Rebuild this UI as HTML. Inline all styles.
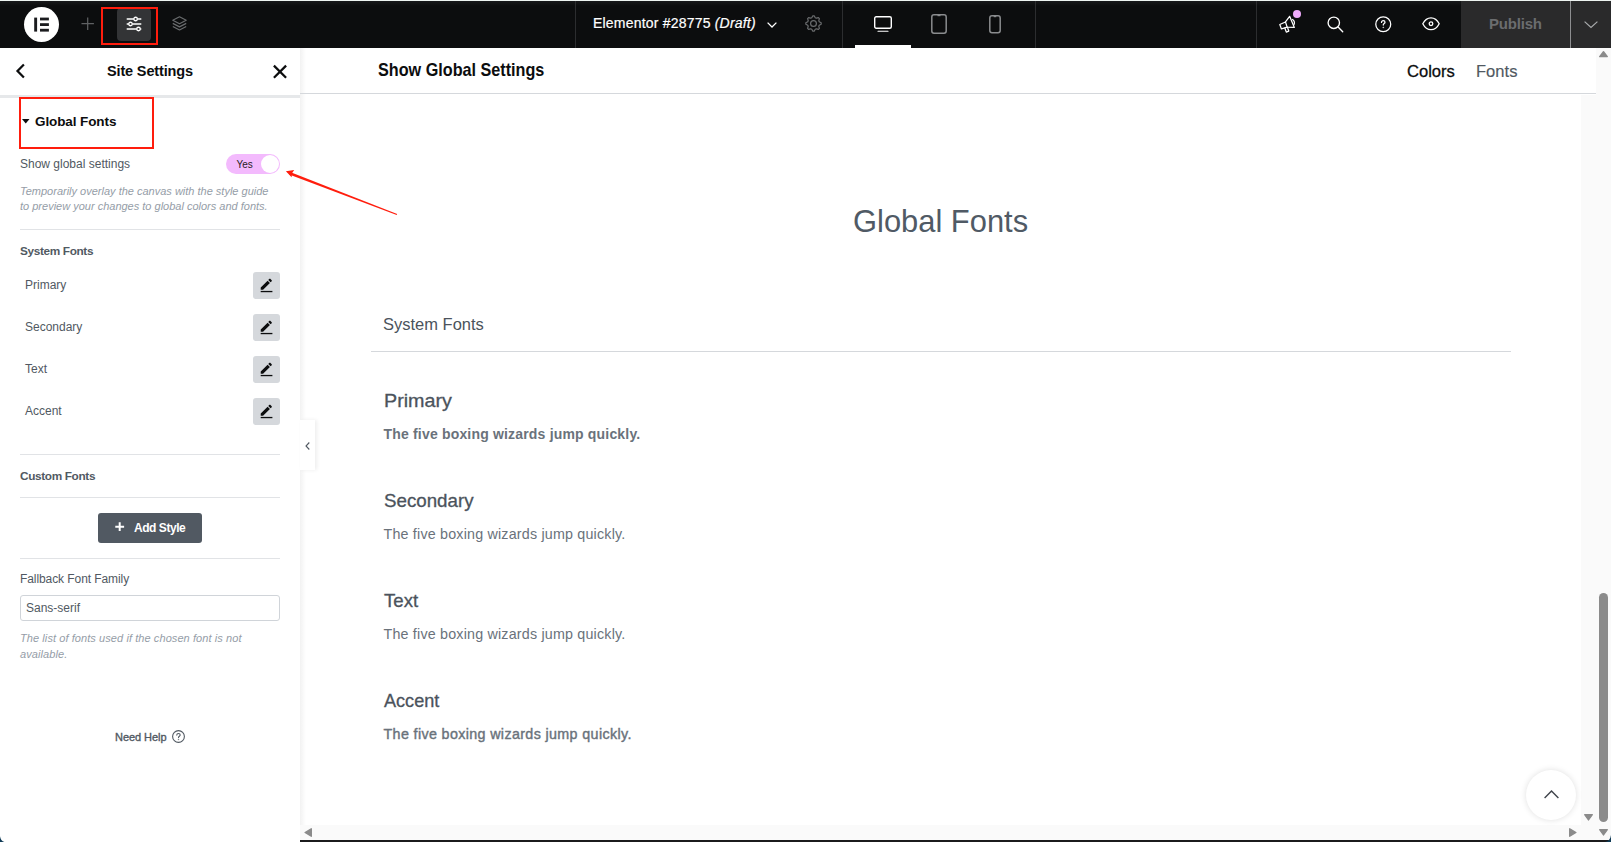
<!DOCTYPE html>
<html lang="en">
<head>
<meta charset="utf-8">
<title>Elementor - Site Settings</title>
<style>
*{box-sizing:border-box;margin:0;padding:0}
html,body{width:1611px;height:842px;overflow:hidden;background:#fff}
body{position:relative;font-family:"Liberation Sans",sans-serif;color:#0c0d0e}
.abs{position:absolute}
.t{position:absolute;white-space:nowrap;line-height:1;transform-origin:0 50%}
svg{position:absolute;overflow:visible}

/* top bar */
#topbar{left:0;top:0;width:1611px;height:48px;background:linear-gradient(180deg,#17181a 0,#131415 2px,#0c0d0e 5px,#0c0d0e 100%);border-top:1px solid #eef4f1}
.vsep{position:absolute;top:1px;width:1px;height:47px;background:#2c2d2f}
#logo{left:24px;top:7px;width:35px;height:35px;border-radius:50%;background:#fff}
#actbtn{left:117px;top:8px;width:34px;height:33px;border-radius:4px;background:#333436}
.redbox{position:absolute;border:2px solid #ff1d0d}
#pub{left:1461px;top:1px;width:109px;height:47px;background:#2a2a2b}
#pubdd{left:1571px;top:1px;width:40px;height:47px;background:#2a2a2b}
#deskul{left:855px;top:45px;width:56px;height:3px;background:#fff}

/* panel */
#panel{left:0;top:48px;width:300px;height:794px;background:#fff}
#phead-shadow{left:0;top:95px;width:300px;height:3px;background:#e6e8ea}
#pedge{left:300px;top:48px;width:6px;height:792px;background:linear-gradient(90deg,rgba(0,0,0,.05),rgba(0,0,0,0))}
.hr{position:absolute;left:20px;width:260px;height:1px;background:#e1e3e6}
.lbl{color:#515962;font-size:12px}
.ebtn{position:absolute;left:253px;width:27px;height:27px;border-radius:3px;background:#d5d8dc}
.desc{position:absolute;left:20px;font-style:italic;font-size:11px;line-height:15px;color:#959da7;white-space:nowrap}
#toggle{left:226px;top:154px;width:54px;height:20px;border-radius:10px;background:#f3bafd}
#knob{left:261px;top:155px;width:18px;height:18px;border-radius:50%;background:#fff}
#addstyle{left:98px;top:513px;width:104px;height:30px;border-radius:3px;background:#515962}
#finput{left:20px;top:595px;width:260px;height:26px;border:1px solid #d0d4d9;border-radius:3px;background:#fff}
#handle{left:300px;top:420px;width:15px;height:50px;background:#fff;box-shadow:2px 0 4px rgba(0,0,0,.07)}

/* preview */
#mhline{left:300px;top:93px;width:1296px;height:1px;background:#d5d8dc}
#sysline{left:371px;top:351px;width:1140px;height:1px;background:#d5d8dc}
#innersb{left:1581px;top:95px;width:15px;height:730px;background:#fafafa}
#outersb{left:1596px;top:48px;width:15px;height:792px;background:#fafafa}
#hsb{left:300px;top:825px;width:1296px;height:15px;background:#fafafa}
#thumb{left:1599px;top:593px;width:9px;height:229px;border-radius:5px;background:#8b8b8b}
#botline{left:300px;top:840px;width:1311px;height:2px;background:#1b1b1c}
#totop{left:1526px;top:770px;width:50px;height:50px;border-radius:50%;background:#fff;box-shadow:0 0 6px rgba(0,0,0,.13)}
.h{color:#4b535c}
.s{color:#6a727b}
</style>
</head>
<body>

<!-- ============ TOP BAR ============ -->
<div class="abs" id="topbar"></div>
<div class="abs" id="logo"></div>
<svg style="left:24px;top:6.500px" width="35" height="35" viewBox="0 0 35 35"><g fill="#1b1c1f"><rect x="10.2" y="10.6" width="2.9" height="14"/><rect x="16" y="10.6" width="8.9" height="2.8"/><rect x="16" y="16.2" width="8.9" height="2.8"/><rect x="16" y="21.8" width="8.9" height="2.8"/></g></svg>
<!-- plus -->
<svg style="left:81px;top:17px" width="13.400" height="13.400" viewBox="0 0 14 14"><path d="M7 .5v13M.5 7h13" stroke="#5f6163" stroke-width="1.3" fill="none"/></svg>
<div class="abs" id="actbtn"></div>
<!-- sliders icon -->
<svg style="left:126px;top:16px" width="16" height="16" viewBox="0 0 16 16" fill="none" stroke="#fff" stroke-width="1.300"><path d="M.7 3h7.100M11.400 3h3.900M.7 8h2M6.300 8h9M.7 13h10M14.300 13h1"/><circle cx="9.600" cy="3" r="1.750"/><circle cx="4.500" cy="8" r="1.750"/><circle cx="12.500" cy="13" r="1.750"/></svg>
<div class="redbox" style="left:101px;top:7px;width:57px;height:38px"></div>
<!-- layers icon -->
<svg style="left:171.900px;top:15.900px" width="15" height="15" viewBox="0 0 15 15" fill="none" stroke="#6a6c6e" stroke-width="1.200" stroke-linejoin="round"><path d="M7.5 .8L14.2 4.3 7.5 7.8 .8 4.3z"/><path d="M.8 7.4L7.5 10.9 14.2 7.4"/><path d="M.8 10.5L7.5 14 14.2 10.5"/></svg>

<div class="vsep" style="left:575px"></div>
<span class="t" style="left:593px;top:16px;font-size:14px;color:#fff;letter-spacing:.2px;-webkit-text-stroke:.2px #fff">Elementor #28775 <i>(Draft)</i></span>
<svg style="left:767px;top:21.5px" width="10" height="6" viewBox="0 0 10 6"><path d="M.6 .6L5 5 9.4 .6" fill="none" stroke="#fff" stroke-width="1.3"/></svg>
<!-- gear -->
<svg style="left:804.800px;top:15.100px" width="17" height="17" viewBox="0 0 17 17" fill="none" stroke="#6a6c6e" stroke-width="1.200" stroke-linejoin="round"><path d="M7.83 0.83L9.17 0.83L10.25 2.76L11.32 3.20L13.45 2.60L14.40 3.55L13.80 5.68L14.24 6.75L16.17 7.83L16.17 9.17L14.24 10.25L13.80 11.32L14.40 13.45L13.45 14.40L11.32 13.80L10.25 14.24L9.17 16.17L7.83 16.17L6.75 14.24L5.68 13.80L3.55 14.40L2.60 13.45L3.20 11.32L2.76 10.25L0.83 9.17L0.83 7.83L2.76 6.75L3.20 5.68L2.60 3.55L3.55 2.60L5.68 3.20L6.75 2.76z"/><circle cx="8.500" cy="8.500" r="2.900"/></svg>
<div class="vsep" style="left:842px"></div>
<!-- desktop -->
<svg style="left:874px;top:15.5px" width="18" height="17" viewBox="0 0 18 17" fill="none" stroke="#fff" stroke-width="1.4"><rect x=".7" y=".7" width="16.6" height="11.6" rx="1.5"/><path d="M4 15.300h10" stroke-linecap="round" stroke-width="1.100"/></svg>
<div class="abs" id="deskul"></div>
<!-- tablet -->
<svg style="left:931px;top:13.500px" width="16" height="20" viewBox="0 0 16 20" fill="none" stroke="#8a8c8e" stroke-width="1.500"><rect x=".8" y=".8" width="14.400" height="18.400" rx="2.200"/><path d="M6.500 1.300h3" stroke-width="1.800"/></svg>
<!-- mobile -->
<svg style="left:989px;top:14.600px" width="12" height="19" viewBox="0 0 12 19" fill="none" stroke="#8a8c8e" stroke-width="1.500"><rect x=".8" y=".8" width="10.400" height="17" rx="2.200"/><path d="M4.700 1.300h2.600" stroke-width="1.800"/></svg>
<div class="vsep" style="left:1035px"></div>
<div class="vsep" style="left:1256px"></div>
<!-- megaphone -->
<svg style="left:1270px;top:5px" width="80" height="35" viewBox="0 0 1611 705" fill="none" stroke="#fff" stroke-width="25" stroke-linejoin="round" stroke-linecap="round"><path d="M312 342L197 392 230 482 345 445"/><path d="M312 342L395 228 490 452 345 445z"/><path d="M298 465L328 545 378 525 352 450"/><path d="M455 292Q512 332 482 400"/></svg>
<div class="abs" style="left:1292.900px;top:9.700px;width:8.400px;height:8.400px;border-radius:50%;background:#f0abfc"></div>
<!-- search -->
<svg style="left:1326.700px;top:15.700px" width="17" height="17" viewBox="0 0 17 17" fill="none" stroke="#fff" stroke-width="1.350"><circle cx="6.800" cy="6.800" r="5.700"/><path d="M11.100 11.100l4.600 4.600" stroke-linecap="round"/></svg>
<!-- help -->
<svg style="left:1374.500px;top:16px" width="16.500" height="16.500" viewBox="0 0 17 17" fill="none" stroke="#fff" stroke-width="1.300"><circle cx="8.500" cy="8.500" r="7.700"/><path d="M6.700 6.600c0-1.100.8-1.800 1.800-1.800s1.800.7 1.800 1.700c0 1.300-1.800 1.400-1.800 2.900" stroke-linecap="round"/><circle cx="8.500" cy="11.700" r=".45" fill="#fff" stroke-width=".6"/></svg>
<!-- eye -->
<svg style="left:1422px;top:16.900px" width="18" height="13.500" viewBox="0 0 18 13.500" fill="none" stroke="#fff" stroke-width="1.300"><path d="M.8 6.750C2.800 2.800 5.700 .8 9 .8s6.200 2 8.200 5.950C15.200 10.700 12.300 12.700 9 12.700S2.800 10.700 .8 6.750z"/><circle cx="9" cy="6.750" r="1.800"/></svg>
<div class="abs" id="pub"></div>
<div class="abs" style="left:1570px;top:1px;width:1px;height:47px;background:#8d8e90"></div>
<div class="abs" id="pubdd"></div>
<span class="t" style="left:1489px;top:16px;font-size:15px;font-weight:bold;color:#6b6d6f;letter-spacing:-.2px">Publish</span>
<svg style="left:1584px;top:20.900px" width="14" height="7" viewBox="0 0 14 7"><path d="M.6 .6L7 6.400 13.400 .6" fill="none" stroke="#a9abad" stroke-width="1.200"/></svg>

<!-- ============ PANEL ============ -->
<div class="abs" id="panel"></div>
<div class="abs" id="phead-shadow"></div>
<svg style="left:16px;top:64px" width="9" height="14" viewBox="0 0 9 14"><path d="M7.900 .5L1.500 7l6.400 6.500" fill="none" stroke="#0c0d0e" stroke-width="2.250"/></svg>
<span class="t" style="left:107px;top:63.600px;font-size:14.500px;font-weight:bold;color:#0c0d0e;letter-spacing:-.15px">Site Settings</span>
<svg style="left:273px;top:65px" width="14" height="13.500" viewBox="0 0 14 13.500"><path d="M.9 .6l12.200 12.200M13.100 .6L.9 12.800" fill="none" stroke="#0c0d0e" stroke-width="2.250"/></svg>

<div class="redbox" style="left:19px;top:97px;width:135px;height:52px"></div>
<svg style="left:21.500px;top:119.300px" width="7.500" height="4.500" viewBox="0 0 7.500 4.500"><path d="M0 0h7.500L3.750 4.500z" fill="#0c0d0e"/></svg>
<span class="t" style="left:35px;top:115px;font-size:13.500px;font-weight:bold;color:#0c0d0e;letter-spacing:-.1px">Global Fonts</span>

<span class="t lbl" style="left:20px;top:158px">Show global settings</span>
<div class="abs" id="toggle"></div>
<div class="abs" id="knob"></div>
<span class="t" style="left:236.500px;top:159.600px;font-size:10px;color:#1f2124">Yes</span>
<div class="desc" style="top:184px">Temporarily overlay the canvas with the style guide<br>to preview your changes to global colors and fonts.</div>
<div class="hr" style="top:229px"></div>

<span class="t lbl" style="left:20px;top:245.700px;font-weight:bold;font-size:11.800px;letter-spacing:-.35px">System Fonts</span>

<span class="t lbl" style="left:25px;top:279px">Primary</span>
<span class="t lbl" style="left:25px;top:321px">Secondary</span>
<span class="t lbl" style="left:25px;top:363px">Text</span>
<span class="t lbl" style="left:25px;top:405px">Accent</span>
<div class="ebtn" style="top:272px"><svg style="left:0;top:0" width="27" height="27" viewBox="0 0 27 27"><path transform="translate(5.870 4.810) scale(.62)" fill="#0c0d0e" d="M3 17.250V21h3.750L17.810 9.940l-3.750-3.750L3 17.250zM20.710 7.040c.39-.39.39-1.020 0-1.410l-2.340-2.340c-.39-.39-1.020-.39-1.410 0l-1.830 1.830 3.750 3.750 1.830-1.830z"/><rect x="7.700" y="18.900" width="11.700" height="1.300" fill="#0c0d0e"/></svg></div>
<div class="ebtn" style="top:314px"><svg style="left:0;top:0" width="27" height="27" viewBox="0 0 27 27"><path transform="translate(5.870 4.810) scale(.62)" fill="#0c0d0e" d="M3 17.250V21h3.750L17.810 9.940l-3.750-3.750L3 17.250zM20.710 7.040c.39-.39.39-1.020 0-1.410l-2.340-2.340c-.39-.39-1.020-.39-1.410 0l-1.830 1.830 3.750 3.750 1.830-1.830z"/><rect x="7.700" y="18.900" width="11.700" height="1.300" fill="#0c0d0e"/></svg></div>
<div class="ebtn" style="top:356px"><svg style="left:0;top:0" width="27" height="27" viewBox="0 0 27 27"><path transform="translate(5.870 4.810) scale(.62)" fill="#0c0d0e" d="M3 17.250V21h3.750L17.810 9.940l-3.750-3.750L3 17.250zM20.710 7.040c.39-.39.39-1.020 0-1.410l-2.340-2.340c-.39-.39-1.020-.39-1.410 0l-1.830 1.830 3.750 3.750 1.830-1.830z"/><rect x="7.700" y="18.900" width="11.700" height="1.300" fill="#0c0d0e"/></svg></div>
<div class="ebtn" style="top:398px"><svg style="left:0;top:0" width="27" height="27" viewBox="0 0 27 27"><path transform="translate(5.870 4.810) scale(.62)" fill="#0c0d0e" d="M3 17.250V21h3.750L17.810 9.940l-3.750-3.750L3 17.250zM20.710 7.040c.39-.39.39-1.020 0-1.410l-2.340-2.340c-.39-.39-1.020-.39-1.410 0l-1.830 1.830 3.750 3.750 1.830-1.830z"/><rect x="7.700" y="18.900" width="11.700" height="1.300" fill="#0c0d0e"/></svg></div>

<div class="hr" style="top:454px"></div>
<span class="t lbl" style="left:20px;top:470.500px;font-weight:bold;font-size:11.800px;letter-spacing:-.35px">Custom Fonts</span>
<div class="hr" style="top:497px"></div>
<div class="abs" id="addstyle"></div>
<svg style="left:115.300px;top:522.300px" width="9.400" height="9.400" viewBox="0 0 10 10"><path d="M5 .3v9.400M.3 5h9.400" stroke="#fff" stroke-width="2.100" fill="none"/></svg>
<span class="t" style="left:134px;top:522px;font-size:12px;font-weight:bold;color:#fff;letter-spacing:-.45px">Add Style</span>
<div class="hr" style="top:558px"></div>
<span class="t lbl" style="left:20px;top:573px;letter-spacing:-.08px">Fallback Font Family</span>
<div class="abs" id="finput"></div>
<span class="t lbl" style="left:26px;top:602px">Sans-serif</span>
<div class="desc" style="top:630px;line-height:16px;letter-spacing:.08px">The list of fonts used if the chosen font is not<br>available.</div>
<span class="t lbl" style="left:115px;top:731.500px;font-size:11px;-webkit-text-stroke:.35px #515962;letter-spacing:-.05px">Need Help</span>
<svg style="left:172px;top:730px" width="13" height="13" viewBox="0 0 13 13" fill="none" stroke="#515962" stroke-width="1.100"><circle cx="6.500" cy="6.500" r="5.900"/><path d="M4.800 5.100c0-1 .8-1.600 1.700-1.600s1.700.6 1.700 1.500c0 1.200-1.700 1.200-1.700 2.500" stroke-linecap="round"/><circle cx="6.500" cy="9.400" r=".4" fill="#515962" stroke-width=".5"/></svg>

<!-- ============ PREVIEW ============ -->
<div class="abs" id="pedge"></div>
<div class="abs" id="mhline"></div>
<span class="t" style="left:378px;top:61px;font-size:18.200px;font-weight:bold;color:#0c0d0e;transform:scaleX(.89)">Show Global Settings</span>
<span class="t" style="left:1407px;top:62.700px;font-size:17px;color:#0c0d0e;-webkit-text-stroke:.3px #0c0d0e;transform:scaleX(.975)">Colors</span>
<span class="t" style="left:1476px;top:62.700px;font-size:17px;color:#515962;-webkit-text-stroke:.15px #515962;transform:scaleX(.975)">Fonts</span>

<span class="t h" style="left:853px;top:204.500px;font-size:32px;color:#505a65;transform:scaleX(.965)">Global Fonts</span>
<span class="t h" style="left:383px;top:315.500px;font-size:17px;transform:scaleX(.97)">System Fonts</span>
<div class="abs" id="sysline"></div>

<span class="t h" style="left:383.800px;top:391.8px;font-size:18.200px;-webkit-text-stroke:.3px #4b535c;transform:scaleX(1.085)">Primary</span>
<span class="t s" style="left:383.500px;top:427.300px;font-size:14px;font-weight:bold;letter-spacing:.18px">The five boxing wizards jump quickly.</span>
<span class="t h" style="left:383.800px;top:491.8px;font-size:18.200px;-webkit-text-stroke:.3px #4b535c;transform:scaleX(1.03)">Secondary</span>
<span class="t s" style="left:383.500px;top:527.200px;font-size:14.300px;letter-spacing:.19px">The five boxing wizards jump quickly.</span>
<span class="t h" style="left:383.800px;top:591.8px;font-size:18.200px;-webkit-text-stroke:.3px #4b535c;transform:scaleX(1.025)">Text</span>
<span class="t s" style="left:383.500px;top:627.200px;font-size:14.300px;letter-spacing:.19px">The five boxing wizards jump quickly.</span>
<span class="t h" style="left:383.800px;top:691.8px;font-size:18.200px;-webkit-text-stroke:.3px #4b535c;transform:scaleX(0.995)">Accent</span>
<span class="t s" style="left:383.500px;top:726.800px;font-size:14.300px;-webkit-text-stroke:.4px #6a727b;letter-spacing:.36px">The five boxing wizards jump quickly.</span>

<!-- arrow annotation -->
<svg style="left:0;top:0" width="1611" height="842" viewBox="0 0 1611 842"><path d="M290.100 172.100L397.150 213.900 396.700 215 289.200 174.600z" fill="#ff1d0d"/><path d="M285.900 171.200L294.200 169.900 292 173.300 291.600 177.200z" fill="#ff1d0d"/></svg>

<!-- scrollbars -->
<div class="abs" id="innersb"></div>
<div class="abs" id="outersb"></div>
<div class="abs" id="hsb"></div>
<div class="abs" id="thumb"></div>
<svg style="left:0;top:0" width="1611" height="842" viewBox="0 0 1611 842" fill="#8b8b8b" stroke="#8b8b8b" stroke-width="1.400" stroke-linejoin="round"><path d="M1599.700 56.600h7.600l-3.800-4.900z"/><path d="M1599.700 829.700h7.600l-3.800 5.200z"/><path d="M1584.700 814.700h7.600l-3.800 5.200z"/><path d="M1569.700 828.800v7.400l6.200-3.700z"/><path d="M311.300 828.800v7.400l-6.200-3.700z"/></svg>
<div class="abs" id="botline"></div>
<div class="abs" id="totop"></div>
<svg style="left:1543.500px;top:790px" width="15" height="8.500" viewBox="0 0 15 8.500"><path d="M.6 8L7.500 .9 14.400 8" fill="none" stroke="#3f444b" stroke-width="1.400"/></svg>

<!-- collapse handle -->
<div class="abs" id="handle"></div>
<svg style="left:305px;top:442px" width="5" height="8" viewBox="0 0 5 8"><path d="M4.300 .5L1 4l3.300 3.500" fill="none" stroke="#515962" stroke-width="1.100"/></svg>

<!-- window corners -->
<svg style="left:0;top:833.500px" width="8.500" height="8.500" viewBox="0 0 8 8"><path d="M0 2C.5 5.500 2.500 7.500 6 8H0z" fill="#0f3a55"/></svg>
<svg style="left:1603px;top:834px" width="8" height="8" viewBox="0 0 8 8"><path d="M8 1C7.500 5 5.500 7.500 2 8h6z" fill="#0f3a55"/></svg>
</body>
</html>
